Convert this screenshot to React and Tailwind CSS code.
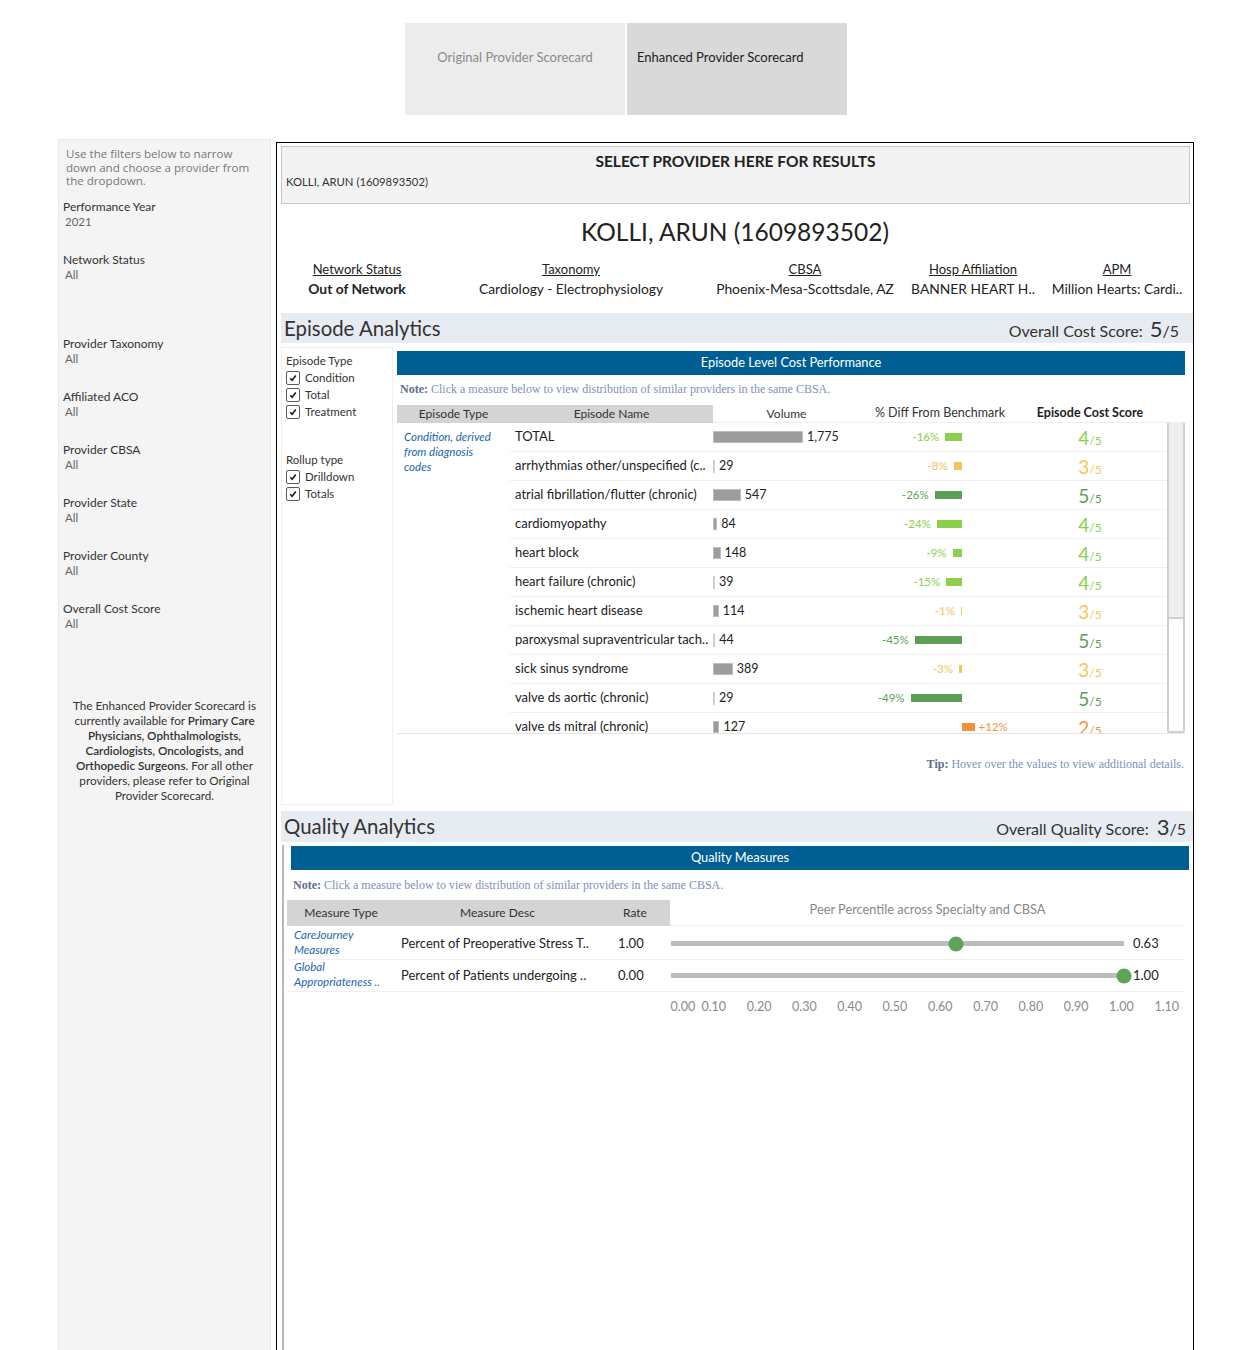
import React from "react";

const rows = [
  { name: "TOTAL", vol: 1775, diff: -16, score: 4 },
  { name: "arrhythmias other/unspecified (c..", vol: 29, diff: -8, score: 3 },
  { name: "atrial fibrillation/flutter (chronic)", vol: 547, diff: -26, score: 5 },
  { name: "cardiomyopathy", vol: 84, diff: -24, score: 4 },
  { name: "heart block", vol: 148, diff: -9, score: 4 },
  { name: "heart failure (chronic)", vol: 39, diff: -15, score: 4 },
  { name: "ischemic heart disease", vol: 114, diff: -1, score: 3 },
  { name: "paroxysmal supraventricular tach..", vol: 44, diff: -45, score: 5 },
  { name: "sick sinus syndrome", vol: 389, diff: -3, score: 3 },
  { name: "valve ds aortic (chronic)", vol: 29, diff: -49, score: 5 },
  { name: "valve ds mitral (chronic)", vol: 127, diff: 12, score: 2 },
];

const scoreColor = { 5: "#5e9f58", 4: "#8ccf4d", 3: "#f0c75c", 2: "#f3913d" };

const filters = [
  { label: "Performance Year", value: "2021", gap: "mb-[23px]" },
  { label: "Network Status", value: "All", gap: "mb-[54px]" },
  { label: "Provider Taxonomy", value: "All", gap: "mb-[23px]" },
  { label: "Affiliated ACO", value: "All", gap: "mb-[23px]" },
  { label: "Provider CBSA", value: "All", gap: "mb-[23px]" },
  { label: "Provider State", value: "All", gap: "mb-[23px]" },
  { label: "Provider County", value: "All", gap: "mb-[23px]" },
  { label: "Overall Cost Score", value: "All", gap: "mb-[0px]" },
];

const Check = ({ label }) => (
  <div className="flex items-center gap-[5px] h-[17px]">
    <span className="w-[14px] h-[14px] border-[1.5px] border-[#5a5a5a] rounded-[2px] flex items-center justify-center bg-white">
      <svg width="8" height="8" viewBox="0 0 8 8">
        <path d="M1.2 4.3 L3.1 6.2 L6.8 1.5" stroke="#1a1a1a" strokeWidth="1.6" fill="none" />
      </svg>
    </span>
    <span className="text-[11.5px] text-[#333]">{label}</span>
  </div>
);

const Row = ({ r }) => {
  const c = scoreColor[r.score];
  const vw = Math.max(2, r.vol * 0.0507);
  const dw = Math.max(1, Math.abs(r.diff) * 1.05);
  const thin = vw < 3;
  return (
    <div className="h-[29px] shrink-0 border-b border-[#efefef] flex items-center">
      <div className="w-[203px] pl-[5px] text-[13px] text-[#222] whitespace-nowrap overflow-hidden">{r.name}</div>
      <div className="w-[147px] flex items-center">
        <div
          className={thin ? "h-[13px] bg-[#cfcfcf]" : "h-[12px] bg-[#9d9d9d] border border-[#bdbdbd]"}
          style={{ width: vw }}
        />
        <span className="ml-[4px] text-[12.5px] text-[#222]">{r.vol.toLocaleString("en-US")}</span>
      </div>
      <div className="w-[180px] flex items-center">
        <div className="w-[102px] flex justify-end items-center gap-[6px]">
          {r.diff < 0 && (
            <>
              <span className="text-[11.5px]" style={{ color: c }}>{r.diff}%</span>
              <div className="h-[8px]" style={{ width: dw, backgroundColor: c }} />
            </>
          )}
        </div>
        <div className="w-[78px] flex items-center gap-[4px]">
          {r.diff > 0 && (
            <>
              <div className="h-[8px]" style={{ width: dw, backgroundColor: c }} />
              <span className="text-[11.5px]" style={{ color: c }}>+{r.diff}%</span>
            </>
          )}
        </div>
      </div>
      <div className="w-[100px] text-center leading-none" style={{ color: c }}>
        <span className="text-[19px]">{r.score}</span>
        <span className="text-[12px]">/5</span>
      </div>
      <div className="w-[27px]" />
    </div>
  );
};

const ticks = [0, 0.1, 0.2, 0.3, 0.4, 0.5, 0.6, 0.7, 0.8, 0.9, 1.0, 1.1];

const QRow = ({ type, desc, rate, pct }) => (
  <div className="flex h-[32px] border-b border-[#efefef]">
    <div className="w-[108px] pl-[7px] pb-[3px] flex flex-col justify-center italic text-[11.5px] leading-[15px] text-[#2166ac] whitespace-nowrap">
      {type.map((t) => (
        <span key={t}>{t}</span>
      ))}
    </div>
    <div className="w-[205px] pl-[6px] flex items-center text-[13px] text-[#222] whitespace-nowrap">{desc}</div>
    <div className="w-[70px] pl-[18px] flex items-center text-[13px] text-[#222]">{rate}</div>
    <div className="w-[515px] flex items-center">
      <div className="ml-[1px] w-[453px] h-[5px] bg-[#bcbcbc] relative">
        <div
          className="absolute top-1/2 w-[15px] h-[15px] rounded-full bg-[#5fa35a] -translate-x-1/2 -translate-y-1/2"
          style={{ left: `${pct * 100}%` }}
        />
      </div>
      <span className="ml-[9px] text-[13px] text-[#222]">{pct.toFixed(2)}</span>
    </div>
  </div>
);

export default function App() {
  return (
    <div className="w-[1250px] h-[1350px] overflow-hidden bg-white flex flex-col [font-family:Lato,sans-serif] text-[#333]">
      {/* Tabs */}
      <div className="flex justify-center gap-[2px] pt-[23px] pl-[2px]">
        <div className="w-[220px] h-[92px] bg-[#ececec] flex justify-center pt-[27px] text-[13px] leading-[15px] text-[#8a8a8a]">
          Original Provider Scorecard
        </div>
        <div className="w-[220px] h-[92px] bg-[#d9d9d9] pl-[10px] pt-[27px] text-[13px] leading-[15px] text-[#222]">
          Enhanced Provider Scorecard
        </div>
      </div>

      <div className="flex flex-1 mt-[24px] min-h-0">
        {/* Sidebar */}
        <div className="ml-[58px] w-[213px] bg-[#f4f4f4] border border-[#e9e9e9] border-b-0 flex flex-col">
          <div className="pl-[7px] pt-[7px] [font-family:'Open_Sans',sans-serif] text-[11.6px] leading-[13.5px] text-[#777] whitespace-nowrap">
            Use the filters below to narrow
            <br />
            down and choose a provider from
            <br />
            the dropdown.
          </div>
          <div className="pl-[4px] mt-[11px] flex flex-col">
            {filters.map((f) => (
              <div key={f.label} className={f.gap}>
                <div className="text-[12px] leading-[15px] text-[#333]">{f.label}</div>
                <div className="pl-[2px] text-[11.5px] leading-[15px] text-[#666]">{f.value}</div>
              </div>
            ))}
          </div>
          <div className="mt-[67px] text-center text-[11.7px] leading-[15px] text-[#333] whitespace-nowrap">
            The Enhanced Provider Scorecard is
            <br />
            currently available for <span className="font-semibold">Primary Care</span>
            <br />
            <span className="font-semibold">Physicians, Ophthalmologists,</span>
            <br />
            <span className="font-semibold">Cardiologists, Oncologists, and</span>
            <br />
            <span className="font-semibold">Orthopedic Surgeons</span>. For all other
            <br />
            providers, please refer to Original
            <br />
            Provider Scorecard.
          </div>
        </div>

        {/* Main */}
        <div className="ml-[5px] mt-[3px] w-[918px] border border-black border-b-0 flex flex-col">
          {/* Select provider */}
          <div className="mr-[3px] ml-[4px] mt-[3px] h-[58px] bg-[#f3f3f3] border border-[#c8c8c8] flex flex-col">
            <div className="pt-[5px] text-center font-bold text-[15.5px] leading-[19px] text-[#222]">
              SELECT PROVIDER HERE FOR RESULTS
            </div>
            <div className="pl-[4px] mt-[4px] text-[11.3px] leading-[14px] text-[#333]">KOLLI, ARUN (1609893502)</div>
          </div>

          <div className="mt-[12px] text-center text-[24.5px] leading-[32px] text-[#222]">KOLLI, ARUN (1609893502)</div>

          <div className="mt-[11px] ml-[4px] flex text-[13.8px] leading-[20px] text-[#222]">
            {[
              ["Network Status", "Out of Network", "w-[152px]", true],
              ["Taxonomy", "Cardiology - Electrophysiology", "w-[276px]", false],
              ["CBSA", "Phoenix-Mesa-Scottsdale, AZ", "w-[192px]", false],
              ["Hosp Affiliation", "BANNER HEART H..", "w-[144px]", false],
              ["APM", "Million Hearts: Cardi..", "w-[144px]", false],
            ].map(([l, v, w, b]) => (
              <div key={l} className={`${w} flex flex-col items-center whitespace-nowrap`}>
                <span className="underline text-[13px]">{l}</span>
                <span className={b ? "font-bold" : ""}>{v}</span>
              </div>
            ))}
          </div>

          {/* Episode band */}
          <div className="mt-[14px] ml-[4px] h-[30px] bg-[#e7ebf2] flex items-center justify-between pl-[3px] pr-[14px]">
            <span className="text-[20.4px] text-[#333]">Episode Analytics</span>
            <span className="flex items-baseline text-[#333]">
              <span className="text-[16px]">Overall Cost Score:</span>
              <span className="ml-[7px] text-[22px]">5</span>
              <span className="text-[16px]">/5</span>
            </span>
          </div>

          {/* Episode section */}
          <div className="h-[468px] ml-[4px] flex">
            <div className="mt-[4px] w-[112px] h-[458px] border border-[#eeeeee] pl-[4px] pt-[6px]">
              <div className="text-[11.5px] leading-[14px] text-[#333] mb-[1px]">Episode Type</div>
              <Check label="Condition" />
              <Check label="Total" />
              <Check label="Treatment" />
              <div className="mt-[33px] text-[11.5px] leading-[14px] text-[#333] mb-[1px]">Rollup type</div>
              <Check label="Drilldown" />
              <Check label="Totals" />
            </div>

            <div className="ml-[4px] mt-[8px] w-[788px] flex flex-col">
              <div className="h-[24px] bg-[#005f92] text-white text-[12.8px] flex items-center justify-center">
                Episode Level Cost Performance
              </div>
              <div className="mt-[7px] pl-[3px] [font-family:'Liberation_Serif',serif] text-[12px] leading-[14px] text-[#8090b8]">
                <span className="font-bold text-[#5d6d8f]">Note:</span> Click a measure below to view distribution of similar providers in the same CBSA.
              </div>
              <div className="mt-[9px] flex h-[18px] text-[12px] text-[#333]">
                <div className="w-[316px] bg-[#d4d4d4] flex items-center">
                  <div className="w-[113px] text-center">Episode Type</div>
                  <div className="w-[203px] text-center">Episode Name</div>
                </div>
                <div className="flex-1 flex items-center border-b border-[#eeeeee]">
                  <div className="w-[147px] text-center">Volume</div>
                  <div className="w-[160px] text-center text-[12.5px]">% Diff From Benchmark</div>
                  <div className="w-[140px] text-center font-bold text-[12.5px] text-[#222]">Episode Cost Score</div>
                </div>
              </div>
              <div className="flex h-[311px] overflow-hidden border-b border-[#e6e6e6]">
                <div className="w-[113px] pl-[7px] pt-[6px] italic text-[11.5px] leading-[15px] text-[#2166ac] whitespace-nowrap">
                  Condition, derived
                  <br />
                  from diagnosis
                  <br />
                  codes
                </div>
                <div className="w-[657px] flex flex-col">
                  {rows.map((r) => (
                    <Row key={r.name} r={r} />
                  ))}
                </div>
                <div className="w-[18px] -mt-[2px] border-2 border-[#d0d0d0] rounded-[2px] bg-white flex flex-col">
                  <div className="h-[196px] bg-[#efefef] border-b-2 border-[#d0d0d0]" />
                </div>
              </div>
              <div className="mt-[23px] text-right pr-[1px] [font-family:'Liberation_Serif',serif] text-[12px] leading-[14px] text-[#8090b8]">
                <span className="font-bold text-[#5d6d8f]">Tip:</span> Hover over the values to view additional details.
              </div>
            </div>
          </div>

          {/* Quality band */}
          <div className="ml-[4px] h-[31px] bg-[#e7ebf2] flex items-center justify-between pl-[3px] pr-[7px]">
            <span className="text-[20.4px] text-[#333]">Quality Analytics</span>
            <span className="flex items-baseline text-[#333]">
              <span className="text-[16px]">Overall Quality Score:</span>
              <span className="ml-[8px] text-[22px]">3</span>
              <span className="text-[16px]">/5</span>
            </span>
          </div>

          {/* Quality section */}
          <div className="flex-1 ml-[5px] mt-[3px] border-l-2 border-[#b8b8b8] flex flex-col">
            <div className="ml-[7px] mt-[1px] w-[898px] h-[24px] bg-[#005f92] text-white text-[12.8px] flex items-center justify-center">
              Quality Measures
            </div>
            <div className="mt-[8px] pl-[9px] [font-family:'Liberation_Serif',serif] text-[12px] leading-[14px] text-[#8090b8]">
              <span className="font-bold text-[#5d6d8f]">Note:</span> Click a measure below to view distribution of similar providers in the same CBSA.
            </div>
            <div className="ml-[3px] mt-[8px] flex flex-col w-[898px]">
              <div className="flex h-[26px] text-[12px] text-[#333]">
                <div className="w-[383px] bg-[#d4d4d4] flex items-center">
                  <div className="w-[108px] text-center">Measure Type</div>
                  <div className="w-[205px] text-center">Measure Desc</div>
                  <div className="w-[70px] text-center">Rate</div>
                </div>
                <div className="w-[515px] flex items-center justify-center pb-[6px] text-[12.8px] text-[#888] border-b border-[#eeeeee]">
                  Peer Percentile across Specialty and CBSA
                </div>
              </div>
              <div className="mt-[2px]">
                <QRow type={["CareJourney", "Measures"]} desc="Percent of Preoperative Stress T.." rate="1.00" pct={0.63} />
                <QRow type={["Global", "Appropriateness .."]} desc="Percent of Patients undergoing .." rate="0.00" pct={1.0} />
              </div>
              <div className="flex mt-[7px] h-[16px]">
                <div className="w-[384px]" />
                <div className="relative w-[520px] text-[12.5px] leading-[16px] text-[#8a8a8a]">
                  {ticks.map((t, i) => (
                    <span
                      key={t}
                      className="absolute top-0 whitespace-nowrap"
                      style={i === 0 ? { left: 2 } : { left: t * 453, transform: "translateX(-50%)" }}
                    >
                      {t.toFixed(2)}
                    </span>
                  ))}
                </div>
              </div>
            </div>
          </div>
        </div>
      </div>
    </div>
  );
}
